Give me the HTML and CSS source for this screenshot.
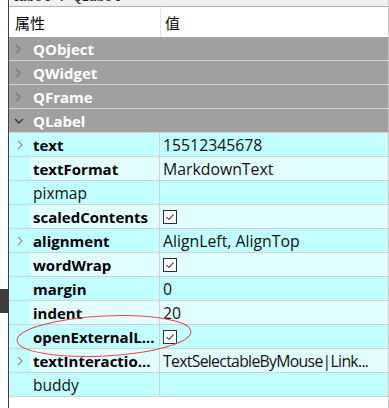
FILE: index.html
```html
<!DOCTYPE html>
<html>
<head>
<meta charset="utf-8">
<link rel="stylesheet" href="styles.css">
</head>
<body>
<div class="screen">
  <div class="gutter"><div class="dark-block"></div></div>
  <div class="panel">
    <div class="titlestrip"><span class="titletext">label : QLabel</span></div>
    <div class="header">
      <div class="hcell hname">属性</div>
      <div class="hcell hvalue">值</div>
    </div>
    <div class="group"><span class="gchev"><svg width="8" height="10" viewBox="0 0 8 10"><polyline points="2,1 6,5 2,9" fill="none" stroke="#7d7d7d" stroke-width="1.5"/></svg></span><span class="gname">QObject</span></div>
    <div class="group"><span class="gchev"><svg width="8" height="10" viewBox="0 0 8 10"><polyline points="2,1 6,5 2,9" fill="none" stroke="#7d7d7d" stroke-width="1.5"/></svg></span><span class="gname">QWidget</span></div>
    <div class="group"><span class="gchev"><svg width="8" height="10" viewBox="0 0 8 10"><polyline points="2,1 6,5 2,9" fill="none" stroke="#7d7d7d" stroke-width="1.5"/></svg></span><span class="gname">QFrame</span></div>
    <div class="group"><span class="gchev"><svg width="10" height="8" viewBox="0 0 10 8"><polyline points="1,2 5,6 9,2" fill="none" stroke="#3a3a3a" stroke-width="1.5"/></svg></span><span class="gname">QLabel</span></div>

    <div class="prop dark"><div class="branch"><svg width="8" height="10" viewBox="0 0 8 10"><polyline points="2,1 6,5 2,9" fill="none" stroke="#a2a2a2" stroke-width="1.5"/></svg></div><div class="pname b">text</div><div class="pvalue">15512345678</div></div>
    <div class="prop light"><div class="branch"></div><div class="pname b">textFormat</div><div class="pvalue">MarkdownText</div></div>
    <div class="prop dark"><div class="branch"></div><div class="pname">pixmap</div><div class="pvalue"></div></div>
    <div class="prop light"><div class="branch"></div><div class="pname b">scaledContents</div><div class="pvalue"><span class="check"><svg width="12" height="12" viewBox="0 0 12 12"><polyline points="2.5,6 5,8.5 9.5,3.5" fill="none" stroke="#555" stroke-width="1.2"/></svg></span></div></div>
    <div class="prop dark"><div class="branch"><svg width="8" height="10" viewBox="0 0 8 10"><polyline points="2,1 6,5 2,9" fill="none" stroke="#a2a2a2" stroke-width="1.5"/></svg></div><div class="pname b">alignment</div><div class="pvalue">AlignLeft, AlignTop</div></div>
    <div class="prop light"><div class="branch"></div><div class="pname b">wordWrap</div><div class="pvalue"><span class="check"><svg width="12" height="12" viewBox="0 0 12 12"><polyline points="2.5,6 5,8.5 9.5,3.5" fill="none" stroke="#555" stroke-width="1.2"/></svg></span></div></div>
    <div class="prop dark"><div class="branch"></div><div class="pname b">margin</div><div class="pvalue">0</div></div>
    <div class="prop light"><div class="branch"></div><div class="pname b">indent</div><div class="pvalue">20</div></div>
    <div class="prop dark"><div class="branch"></div><div class="pname b">openExternalL...</div><div class="pvalue"><span class="check"><svg width="12" height="12" viewBox="0 0 12 12"><polyline points="2.5,6 5,8.5 9.5,3.5" fill="none" stroke="#555" stroke-width="1.2"/></svg></span></div></div>
    <div class="prop light"><div class="branch"><svg width="8" height="10" viewBox="0 0 8 10"><polyline points="2,1 6,5 2,9" fill="none" stroke="#a2a2a2" stroke-width="1.5"/></svg></div><div class="pname b">textInteractio...</div><div class="pvalue"><span class="tight">TextSelectableByMouse|Link...</span></div></div>
    <div class="prop dark"><div class="branch"></div><div class="pname">buddy</div><div class="pvalue"></div></div>
  </div>
  <svg class="annot" width="389" height="408" viewBox="0 0 389 408"><ellipse cx="104" cy="336" rx="87" ry="20" transform="rotate(-3 104 336)" fill="none" stroke="#e8484a" stroke-width="1"/></svg>
</div>
</body>
</html>
```

FILE: styles.css
```css
html, body {
  margin: 0;
  padding: 0;
  background: #ffffff;
}
.screen {
  position: relative;
  width: 389px;
  height: 408px;
  overflow: hidden;
  display: flex;
  font-family: "Open Sans", "Noto Sans CJK SC", sans-serif;
}
.gutter {
  width: 8px;
  flex: none;
  background: #ffffff;
}
.dark-block {
  margin-top: 289px;
  height: 24px;
  background: #3c3c3c;
}
.panel {
  flex: none;
  width: 379px;
  border-left: 1px solid #3f3f3f;
  border-right: 1px solid #c8c8c8;
  display: flex;
  flex-direction: column;
  background: #ffffff;
}
.titlestrip {
  height: 6px;
  background: #f0f0f0;
  border-bottom: 1px solid #b4b4b4;
  overflow: hidden;
}
.titletext {
  display: block;
  margin-top: -9px;
  margin-left: 2px;
  font-family: "Liberation Mono", monospace;
  font-size: 13px;
  line-height: 14px;
  color: #222;
}
.header {
  height: 30px;
  display: flex;
  font-family: "Noto Sans CJK SC", sans-serif;
  font-size: 15px;
  color: #000;
}
.hcell {
  display: flex;
  align-items: center;
}
.hname {
  width: 145px;
  padding-left: 6px;
  border-right: 1px solid #e4e4e4;
}
.hvalue {
  padding-left: 4px;
}
.group {
  height: 23px;
  border-bottom: 1px solid #d2d2d2;
  background: #a0a0a0;
  display: flex;
  align-items: center;
}
.gchev {
  width: 24px;
  padding-left: 5px;
  box-sizing: border-box;
  display: flex;
  align-items: center;
}
.gname {
  color: #ffffff;
  font-weight: 700;
  font-size: 15px;
}
.prop {
  height: 23px;
  border-bottom: 1px solid #d2d2d2;
  display: flex;
  font-size: 15.5px;
  color: #111;
}
.prop.dark { background: #c2ffff; }
.prop.light .pname, .prop.light .pvalue { background: #e2ffff; }
.branch {
  width: 21px;
  flex: none;
  background: #c2ffff;
  display: flex;
  align-items: center;
  padding-left: 7px;
  box-sizing: border-box;
}
.pname {
  width: 130px;
  flex: none;
  padding-left: 3px;
  box-sizing: border-box;
  border-right: 1px solid #d2d2d2;
  display: flex;
  align-items: center;
  white-space: nowrap;
  overflow: hidden;
}
.pname.b { font-weight: 700; color: #000; font-size: 15px; }
.pvalue {
  flex: 1;
  padding-left: 3px;
  display: flex;
  align-items: center;
  white-space: nowrap;
  overflow: hidden;
  font-size: 15.8px;
}
.tight {
  letter-spacing: -0.7px;
}
.check {
  width: 14px;
  height: 14px;
  border: 1px solid #333333;
  background: #ffffff;
  display: flex;
  align-items: center;
  justify-content: center;
  box-sizing: border-box;
}
.annot {
  position: absolute;
  left: 0;
  top: 0;
  pointer-events: none;
}
```
